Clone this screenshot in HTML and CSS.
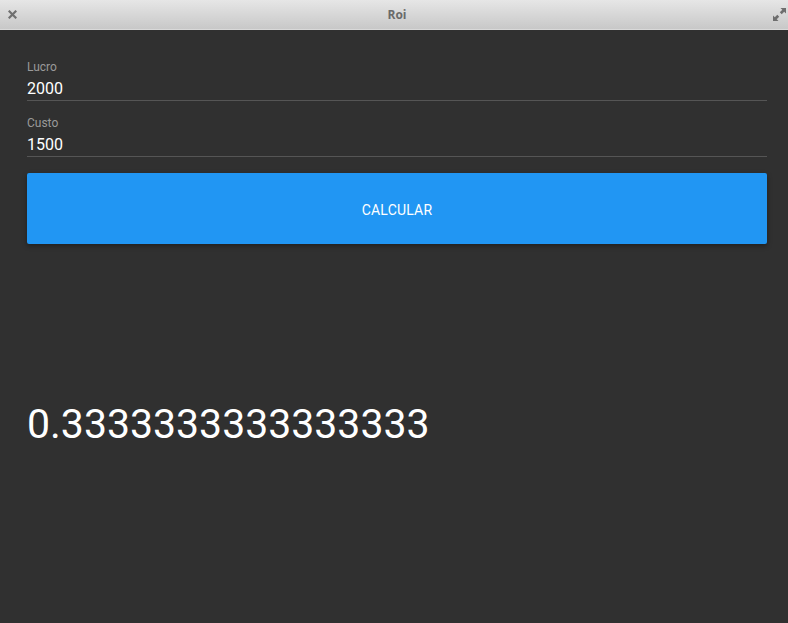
FILE: index.html
```html
<!DOCTYPE html>
<html>
<head>
<meta charset="utf-8">
<title>Roi</title>
<link rel="stylesheet" href="styles.css">
</head>
<body>
<div class="window">
  <header class="titlebar">
    <span class="close">
      <svg width="9" height="9" viewBox="0 0 9 9"><path d="M1.5 1.5 L7.5 7.5 M7.5 1.5 L1.5 7.5" stroke="#707070" stroke-width="2.2" stroke-linecap="square"/></svg>
    </span>
    <span class="title">Roi</span>
    <span class="maximize">
      <svg width="13" height="13" viewBox="0 0 13 13"><path d="M13 0 L7.5 0 L9.3 1.8 L6.8 4.3 L8.7 6.2 L11.2 3.7 L13 5.5 Z M0 13 L5.5 13 L3.7 11.2 L6.2 8.7 L4.3 6.8 L1.8 9.3 L0 7.5 Z" fill="#6e6e6e"/></svg>
    </span>
  </header>
  <main class="content">
    <div class="field">
      <div class="label">Lucro</div>
      <div class="value">2000</div>
    </div>
    <div class="field">
      <div class="label">Custo</div>
      <div class="value">1500</div>
    </div>
    <button class="button">CALCULAR</button>
    <div class="result">0.3333333333333333</div>
  </main>
</div>
</body>
</html>
```
FILE: styles.css
```css
html, body {
  margin: 0;
  padding: 0;
  background: #303030;
  font-family: Roboto, "Noto Sans", sans-serif;
}
.window {
  width: 788px;
  height: 623px;
  overflow: hidden;
  background: #303030;
}
.titlebar {
  height: 29px;
  border-bottom: 1px solid #d9d9d9;
  background: linear-gradient(#e6e6e6, #c8c8c8);
  display: flex;
  align-items: center;
  justify-content: space-between;
  padding: 0 2px 0 8px;
}
.close {
  display: flex;
  width: 9px;
  height: 9px;
  margin-right: 4px;
}
.title {
  font-family: "Open Sans", "DejaVu Sans", sans-serif;
  font-weight: 700;
  font-size: 12px;
  color: #6a6a6a;
}
.maximize {
  display: flex;
  width: 13px;
  height: 13px;
}
.content {
  padding: 30px 21px 0 27px;
  display: flex;
  flex-direction: column;
}
.field {
  display: flex;
  flex-direction: column;
  border-bottom: 1px solid #555555;
  padding-bottom: 1px;
  margin-bottom: 15px;
}
.label {
  font-size: 12px;
  line-height: 14px;
  color: #9a9a9a;
}
.value {
  margin-top: 5px;
  font-size: 16px;
  line-height: 20px;
  color: #ffffff;
}
.field + .field {
  margin-bottom: 16px;
}
.button {
  height: 71px;
  border: none;
  border-radius: 2px;
  background: #2196f3;
  color: #ffffff;
  font-family: Roboto, sans-serif;
  font-size: 14px;
  font-weight: 400;
  letter-spacing: 0.2px;
  box-shadow: 0 2px 5px rgba(0, 0, 0, 0.35);
  padding: 3px 0 0;
}
.result {
  margin-top: 156px;
  font-size: 41px;
  line-height: 48px;
  color: #ffffff;
}
```
